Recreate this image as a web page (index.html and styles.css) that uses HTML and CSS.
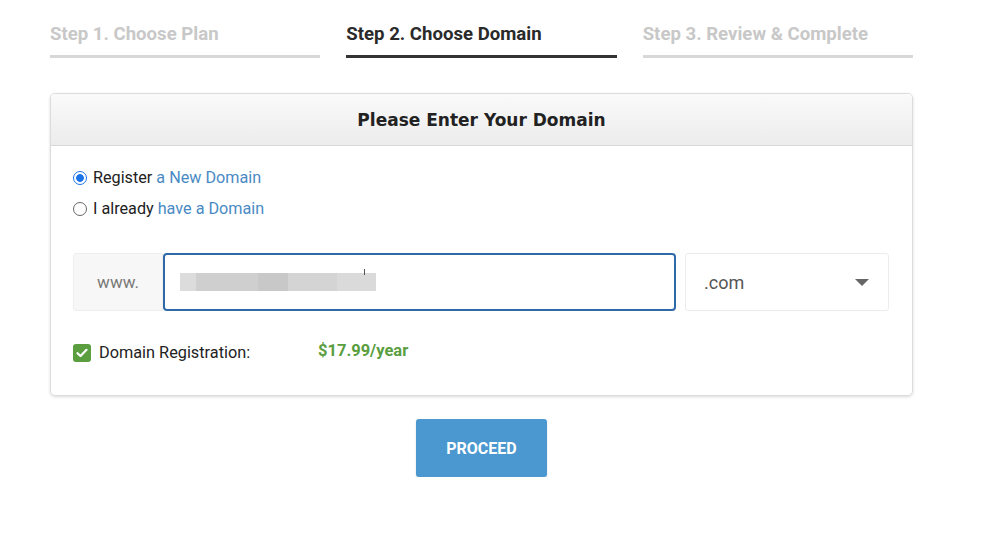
FILE: index.html
```html
<!DOCTYPE html>
<html>
<head>
<meta charset="utf-8">
<link rel="stylesheet" href="styles.css">
</head>
<body>
<div class="wrap">
  <div class="steps">
    <div class="step">Step 1. Choose Plan</div>
    <div class="step active">Step 2. Choose Domain</div>
    <div class="step">Step 3. Review &amp; Complete</div>
  </div>
  <div class="card">
    <div class="card-head">Please Enter Your Domain</div>
    <div class="card-body">
      <label class="radio-row"><span class="radio checked"></span><span>Register <span class="link">a New Domain</span></span></label>
      <label class="radio-row"><span class="radio"></span><span>I already <span class="link">have a Domain</span></span></label>
      <div class="domain-row">
        <div class="prefix">www.</div>
        <div class="input"><span class="blur"></span><span class="caret"></span></div>
        <div class="select"><span>.com</span><span class="arrow"></span></div>
      </div>
      <div class="reg-row">
        <span class="check"><svg width="12" height="10" viewBox="0 0 12 10"><path d="M1.5 5.2 L4.5 8 L10.5 1.8" fill="none" stroke="#fff" stroke-width="2.2" stroke-linecap="round" stroke-linejoin="round"/></svg></span>
        <span class="reg-label">Domain Registration:</span>
        <span class="price">$17.99/year</span>
      </div>
    </div>
  </div>
  <div class="actions"><button class="proceed">PROCEED</button></div>
</div>
</body>
</html>
```
FILE: styles.css
```css
* { box-sizing: border-box; }
body { margin: 0; background: #fff; font-family: Roboto, "Liberation Sans", sans-serif; color: #222; }
.wrap { width: 863px; margin-left: 50px; }
.steps { display: flex; gap: 26px; padding-top: 23px; }
.step { flex: 1; font-size: 18.6px; font-weight: 700; color: #c8c8c8; padding-bottom: 10px; border-bottom: 3px solid #d8d8d8; white-space: nowrap; line-height: 22px; }
.step.active { color: #2a2a2a; border-bottom-color: #333; }
.card { margin-top: 35px; border: 1px solid #dcdcdc; border-radius: 5px; box-shadow: 0 1px 3px rgba(0,0,0,0.15); overflow: hidden; }
.card-head { height: 52px; display: flex; align-items: center; justify-content: center; font-family: "DejaVu Sans", Inter, sans-serif; font-weight: 700; font-size: 17px; color: #222; background: linear-gradient(#fafafa, #ececec); border-bottom: 1px solid #d8d8d8; }
.card-body { padding: 16px 23px 33px 22px; }
.radio-row { display: flex; align-items: center; gap: 6px; font-size: 16.2px; color: #222; height: 31px; }
.radio { width: 14px; height: 14px; border-radius: 50%; border: 1px solid #666; background: #fff; display: inline-block; flex: none; }
.radio.checked { border: 1.5px solid #1a73e8; background: radial-gradient(circle, #1a73e8 0 3.5px, #fff 4.2px); }
.link { color: #4a8ac4; }
.domain-row { display: flex; margin-top: 29px; height: 58px; }
.prefix { width: 90px; background: #f7f7f7; border: 1px solid #eee; border-radius: 3px 0 0 3px; display: flex; align-items: center; justify-content: center; font-size: 17px; color: #777; }
.input { flex: 1; border: 2px solid #2f6aa8; border-radius: 4px; display: flex; align-items: center; padding-left: 15px; position: relative; }
.blur { width: 196px; height: 18px; background: linear-gradient(90deg, #dcdcdc 0 8%, #cfcfcf 8% 40%, #c8c8c8 40% 55%, #d4d4d4 55% 80%, #dadada 80%); }
.caret { position: absolute; left: 199px; top: 14px; width: 1px; height: 6px; background: #555; }
.select { width: 204px; margin-left: 9px; border: 1px solid #ececec; border-radius: 3px; display: flex; align-items: center; justify-content: space-between; padding: 0 19px 0 18px; font-size: 18px; color: #555; }
.arrow { width: 0; height: 0; border-left: 7px solid transparent; border-right: 7px solid transparent; border-top: 7px solid #666; }
.reg-row { display: flex; align-items: center; margin-top: 32px; font-size: 16.3px; }
.check { width: 18px; height: 18px; border-radius: 3px; background: #5a9e3f; display: flex; align-items: center; justify-content: center; flex: none; }
.reg-label { margin-left: 8px; width: 219px; color: #222; }
.price { color: #5a9e3f; font-weight: 700; font-size: 16.5px; margin-top: -4px; }
.actions { display: flex; justify-content: center; margin-top: 23px; }
.proceed { width: 131px; height: 58px; border: none; border-radius: 3px; background: #4b97d0; color: #fff; font-family: Roboto, "Liberation Sans", sans-serif; font-weight: 700; font-size: 16px; box-shadow: 0 1px 2px rgba(0,0,0,0.15); }
```
